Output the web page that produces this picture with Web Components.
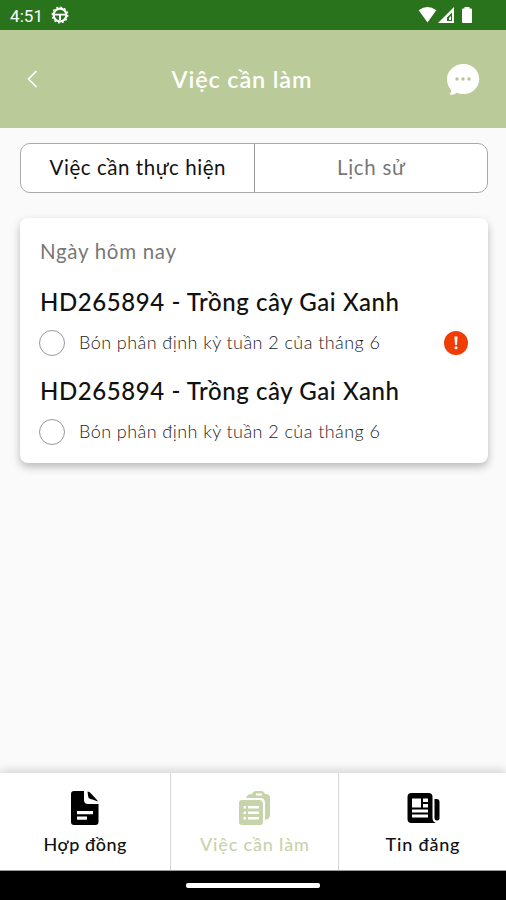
<!DOCTYPE html>
<html lang="vi">
<head>
<meta charset="utf-8">
<title>Việc cần làm</title>
<style>
html,body{margin:0;height:100%}
body{font-family:Lato,"Open Sans",sans-serif;background:#fafafa;overflow:hidden}
</style>
</head>
<body>
<todo-app></todo-app>
<script>
const define = (name, html) => customElements.define(name, class extends HTMLElement {
  constructor() {
    super();
    const attrs = {};
    for (const a of this.attributes) attrs[a.name] = a.value;
    this.attachShadow({mode: 'open'}).innerHTML = typeof html === 'function' ? html(attrs) : html;
  }
});

customElements.define('fit-text', class extends HTMLElement {
  connectedCallback() {
    if (this.shadowRoot) return;
    this.attachShadow({mode: 'open'}).innerHTML = `<style>
      :host{display:inline-block;white-space:nowrap;line-height:1.2}
      span{display:inline-block}
    </style><span><slot></slot></span>`;
    const target = +this.getAttribute('w');
    const n = [...this.textContent].length;
    const now = this.shadowRoot.querySelector('span').getBoundingClientRect().width;
    this.style.letterSpacing = (target - now) / (n - 1) + 'px';
    this.style.marginRight = -(target - now) / (n - 1) + 'px';
  }
});

define('status-bar', `<style>
:host{display:flex;box-sizing:border-box;height:30px;background:#28731b;color:#fff;align-items:center;padding:0 32px 0 10px}
fit-text{font:400 17px/20px Roboto,sans-serif;padding-top:2px}
.gear{margin-left:8px}.right{margin-left:auto}
svg{display:block}
</style>
<fit-text w="33">4:51</fit-text>
<svg class="gear" width="18" height="18" viewBox="0 0 18 18" fill="none" stroke="#fff"><circle cx="9" cy="9" r="6.400" stroke-width="2.200"/><circle cx="9" cy="9" r="7.800" stroke-width="1.300" stroke-dasharray="2 2.080"/><path d="M3 8.600h12M9 9v5" stroke-width="1.900"/></svg>
<svg class="right" width="56" height="18" viewBox="0 0 56 18" fill="#fff"><path d="M.7 4.200Q9.500-2 18.300 4.200L9.500 16.400Z"/><path fill-rule="evenodd" d="M20 17 36 1v16ZM29 15h5V6.500l-5 5Z"/><path d="M31 14v-2l2-2v4z"/><path d="M46.500 1h5v1.500H53q1 0 1 1V16q0 1-1 1h-8q-1 0-1-1V3.500q0-1 1-1h1.500z"/></svg>`);

define('app-header', a => `<style>
:host{display:grid;grid-template-columns:60px 1fr 60px;box-sizing:border-box;height:98px;background:#bacb99;color:#fff;align-items:center;justify-items:center;padding:0 11px}
fit-text{font-size:23.500px;font-weight:600;margin-left:-23px}
svg{display:block}.back{justify-self:start;margin-left:14px}.chat{justify-self:end;margin-right:15px}
</style>
<svg class="back" width="14" height="22" viewBox="0 0 14 22" fill="none" stroke="#fff" stroke-width="1.700"><path d="m11.500 3-8 8 8 8"/></svg>
<fit-text w="140">${a.heading}</fit-text>
<svg class="chat" width="34" height="34" viewBox="0 0 34 34"><path fill="#fff" d="M17.500 2C26 2 33.200 8.300 33.200 17S26 32 17.500 32c-2.500 0-4.600-.5-6.600-1.500-1.500 1.800-3.700 2.300-6.400 2.200-.8 0-1-.9-.3-1.300 1-.7 1.400-2.300.7-3.500C2.500 25 1 21.500 1 17 1 8.300 9 2 17.500 2Z"/><g fill="#b6c596"><circle cx="11" cy="17" r="1.700"/><circle cx="17" cy="17" r="1.700"/><circle cx="23" cy="17" r="1.700"/></g></svg>`);

define('view-tabs', `<style>
:host{display:grid;grid-template-columns:233px 1fr;box-sizing:border-box;height:50px;border:1px solid #aaa;border-radius:10px;background:#fff;overflow:hidden}
div{display:flex;align-items:center;justify-content:center;font-size:20.500px;color:#111;padding-bottom:2px}
div+div{border-left:1px solid #999;color:#777}
</style><div><fit-text w="176">Việc cần thực hiện</fit-text></div><div><fit-text w="68">Lịch sử</fit-text></div>`);

define('task-card', `<style>
:host{display:block;box-sizing:border-box;height:245px;border-radius:8px;background:#fff;box-shadow:0 4px 9px rgba(0,0,0,.26);padding:19px 20px 0}
h2{margin:0;height:48px;font-weight:400;font-size:20.500px;line-height:28px;color:#777}
</style><h2><fit-text w="136">Ngày hôm nay</fit-text></h2><slot></slot>`);

define('task-item', a => `<style>
:host{display:block;height:89px}
h3{margin:0;height:35px;font-size:24px;font-weight:500;line-height:32px;color:#111;display:flex;align-items:center}
.row{display:flex;align-items:center;height:46px}
i{box-sizing:border-box;width:26px;height:26px;border:1px solid #999;border-radius:50%;margin:0 14px 0 -1px}
.row fit-text{font-size:18px;font-weight:300;color:#222}
svg{margin-left:auto}
</style><h3><fit-text w="359">${a.code}</fit-text></h3>
<div class="row"><i></i><fit-text w="301">${a.note}</fit-text>${'late' in a ? '<svg width="24" height="24" viewBox="0 0 24 24"><circle cx="12" cy="12" r="12" fill="#f03d05"/><path d="M10.500 5.500h3l-.5 8.500h-2z" fill="#fff"/><circle cx="12" cy="16.700" r="1.500" fill="#fff"/></svg>' : ''}</div>`);

define('nav-item', a => `<style>
:host{display:flex;flex-direction:column;align-items:center;box-sizing:border-box;padding-top:17px;font-size:18px;font-weight:500;color:#111}
:host([active]){color:#c7d3aa}
:host([divided]){border-left:1px solid #d6d6d6}
::slotted(svg){display:block;height:36px;width:36px}
fit-text{margin-top:8px}
</style><slot></slot><fit-text w="${a.w}">${a.label}</fit-text>`);

define('bottom-nav', `<style>
:host{display:grid;grid-template-columns:170px 168px 1fr;height:98px;background:#fff;box-shadow:0 -3px 9px rgba(0,0,0,.15);border-bottom:1px solid #999;box-sizing:border-box}
</style>
<nav-item label="Hợp đồng" w="83"><svg viewBox="0 0 36 36"><path fill="#000" fill-rule="evenodd" d="M7 1h10v9q0 4 4 4H31.500V32q0 3-3 3H7q-3 0-3-3V4q0-3 3-3ZM10 21v3.200h16V21Zm0 5.500v3.200h10v-3.200Z"/><path fill="#000" d="M20.500 1.500q2 0 3.500 2l6 6.500q.6.800.7 1.500-4-2-7-2.500-2.500-.5-2.500-2.500Z"/></svg></nav-item>
<nav-item active divided label="Việc cần làm" w="109"><svg viewBox="0 0 36 36"><path fill="#c7d3aa" fill-rule="evenodd" d="M9 8q1-4 6-4 1-3 4-3h5q3 0 4 3h1q4 0 4 4v17q0 4-5 5V13q0-5-5-5Zm10-4.500v2h6v-2Z"/><path fill="#c7d3aa" fill-rule="evenodd" d="M5 10h17q4 0 4 4v18q0 3-3 3H5q-3 0-3-3V13q0-3 3-3Zm1.500 6v2.500H9V16Zm4.500 0v2.500h11V16Zm-4.500 5.500V24H9v-2.500Zm4.500 0V24h11v-2.500ZM6.500 27v2.500H9V27Zm4.500 0v2.500h11V27Z"/></svg></nav-item>
<nav-item divided label="Tin đăng" w="74"><svg viewBox="0 0 36 36"><path fill="#000" fill-rule="evenodd" d="M6.500 3h17q4 0 4 4v21q0 4 3.500 5H6.500q-4 0-4-4V7q0-4 4-4ZM7 8.500v9h9v-9Zm11 0v3.500h5V8.500Zm0 5.500v3.500h5V14ZM7 19.500v3h16v-3Zm0 5v3h16v-3Z"/><path fill="#000" d="M29.500 9h2q3 0 3 3v16q0 2.500-2.500 2.500T29.500 28Z"/></svg></nav-item>`);

define('todo-app', `<style>
:host{display:flex;flex-direction:column;width:506px;height:900px;background:#fafafa}
main{flex:1;display:flex;flex-direction:column;gap:25px;padding:15px 18px 0 20px}
footer{height:29px;background:#000;display:flex;justify-content:center;align-items:center}
footer i{width:134px;height:5px;border-radius:2px;background:#fff}
</style>
<status-bar></status-bar><app-header heading="Việc cần làm"></app-header>
<main><view-tabs></view-tabs><task-card>
<task-item code="HD265894 - Trồng cây Gai Xanh" note="Bón phân định kỳ tuần 2 của tháng 6" late></task-item>
<task-item code="HD265894 - Trồng cây Gai Xanh" note="Bón phân định kỳ tuần 2 của tháng 6"></task-item>
</task-card></main><bottom-nav></bottom-nav><footer><i></i></footer>`);
</script>
</body>
</html>
